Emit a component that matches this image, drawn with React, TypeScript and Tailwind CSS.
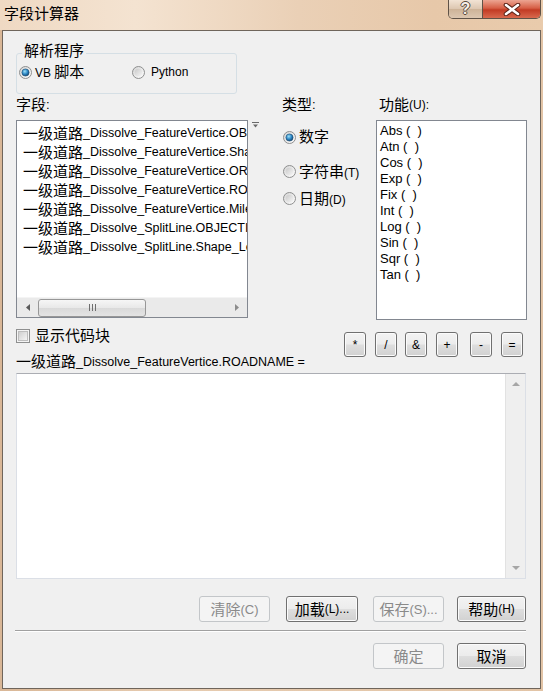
import React from 'react';

// CJK glyphs in this dialog are a bit larger than the latin ones
const C: React.FC<{ children: React.ReactNode }> = ({ children }) => (
  <span className="text-[15px]">{children}</span>
);

const Radio: React.FC<{ checked?: boolean }> = ({ checked }) => (
  <svg width="13" height="13" viewBox="0 0 13 13" className="shrink-0">
    <defs>
      <linearGradient id="radioBg" x1="0" y1="0" x2="1" y2="1">
        <stop offset="0" stopColor="#d4d4d4" />
        <stop offset="1" stopColor="#ffffff" />
      </linearGradient>
      <radialGradient id="radioDot" cx="0.4" cy="0.35" r="0.7">
        <stop offset="0" stopColor="#9be0f8" />
        <stop offset="0.55" stopColor="#2c86c4" />
        <stop offset="1" stopColor="#123f66" />
      </radialGradient>
      <linearGradient id="radioIn" x1="0" y1="0" x2="1" y2="1">
        <stop offset="0" stopColor="#c9c9c9" />
        <stop offset="1" stopColor="#f6f6f6" />
      </linearGradient>
    </defs>
    <circle cx="6.5" cy="6.5" r="6" fill="url(#radioBg)" stroke="#8e8f8f" />
    {checked ? (
      <circle cx="6.5" cy="6.5" r="3.6" fill="url(#radioDot)" stroke="#1b4d74" strokeWidth="0.6" />
    ) : (
      <circle cx="6.5" cy="6.5" r="3.8" fill="url(#radioIn)" />
    )}
  </svg>
);

const Checkbox: React.FC = () => (
  <svg width="14" height="14" viewBox="0 0 14 14" className="shrink-0">
    <defs>
      <linearGradient id="cbIn" x1="0" y1="0" x2="1" y2="1">
        <stop offset="0" stopColor="#cdcdcd" />
        <stop offset="1" stopColor="#f7f7f7" />
      </linearGradient>
    </defs>
    <rect x="0.5" y="0.5" width="13" height="13" fill="#f4f4f4" stroke="#8e8f8f" />
    <rect x="2.5" y="2.5" width="9" height="9" fill="url(#cbIn)" stroke="#bdbdbd" />
  </svg>
);

const Btn: React.FC<{ w: string; disabled?: boolean; children: React.ReactNode }> = ({ w, disabled, children }) => (
  <div
    className={`${w} h-[26px] shrink-0 rounded-[3px] flex items-center justify-center leading-none ${
      disabled
        ? 'border border-[#c3c6c9] bg-[#f4f4f4] text-[#8a8a8a]'
        : 'border border-[#707070] bg-[linear-gradient(#f3f3f3,#ececec_48%,#dedede_52%,#d1d1d1)] shadow-[inset_0_0_0_1px_#fbfbfb]'
    }`}
  >
    {children}
  </div>
);

const OpBtn: React.FC<{ label: string; ml: string }> = ({ label, ml }) => (
  <div className={`${ml} w-[22px] h-[25px] rounded-[3px] border border-[#707070] bg-[linear-gradient(#f3f3f3,#ececec_48%,#dedede_52%,#d1d1d1)] shadow-[inset_0_0_0_1px_#fbfbfb] flex items-center justify-center text-[12px]`}>
    {label}
  </div>
);

const fields = [
  'FeatureVertice.OBJECTID',
  'FeatureVertice.Shape',
  'FeatureVertice.ORIG_FID',
  'FeatureVertice.ROADNAME',
  'FeatureVertice.Mileage',
  'SplitLine.OBJECTID',
  'SplitLine.Shape_Length',
];

const funcs = ['Abs (  )', 'Atn (  )', 'Cos (  )', 'Exp (  )', 'Fix (  )', 'Int (  )', 'Log (  )', 'Sin (  )', 'Sqr (  )', 'Tan (  )'];

export default function App() {
  return (
    <div className="w-[543px] h-[691px] overflow-hidden bg-[linear-gradient(90deg,#d9b797,#e6cbb0_30%,#e2c4a6_100%)] font-['Liberation_Sans','Noto_Sans_CJK_SC',sans-serif] text-[13px] text-black">
      {/* title bar */}
      <div className="h-[30px] flex items-start bg-[linear-gradient(90deg,#efd9c3_0%,#f4e3d1_25%,#ead0b6_55%,#e7c8a9_80%,#e9cbac_100%)]">
        <div className="h-[28px] pl-[4px] flex items-center">
          <C>字段计算器</C>
        </div>
        <div className="ml-auto mr-[2px] flex h-[19px] border border-t-0 border-[#5f5247] rounded-b-[5px] overflow-hidden">
          <div className="w-[34px] flex items-center justify-center border-r border-[#5f5247] bg-[linear-gradient(#f2e3d4,#dcc6b0_50%,#cdb398_51%,#dcc6b0)]">
            <span className="text-[16px] font-bold leading-none text-[#f6efe8] [text-shadow:1px_0_#5a4a3c,-1px_0_#5a4a3c,0_1px_#5a4a3c,0_-1px_#5a4a3c]">?</span>
          </div>
          <div className="w-[57px] flex items-center justify-center bg-[linear-gradient(#eca592,#d65f46_45%,#c23b24_55%,#d8694e)]">
            <svg width="20" height="13" viewBox="0 0 20 13">
              <path d="M4 2 L16 11 M16 2 L4 11" stroke="#5a2318" strokeWidth="4.6" strokeLinecap="round" />
              <path d="M4 2 L16 11 M16 2 L4 11" stroke="#ffffff" strokeWidth="2.6" strokeLinecap="round" />
            </svg>
          </div>
        </div>
      </div>

      {/* dialog body */}
      <div className="ml-[2px] w-[539px] h-[659px] border border-[#6f655b] bg-[#f0f0f0] flex flex-col">
        {/* 解析程序 group */}
        <div className="relative ml-[13px] mt-[22px] w-[221px] h-[41px] rounded-[3px] border border-[#d5dfe5]">
          <span className="absolute left-[5px] -top-[13px] px-[2px] bg-[#f0f0f0] leading-[20px]">
            <C>解析程序</C>
          </span>
          <div className="mt-[11px] pl-[2px] h-[14px] flex items-center">
            <div className="w-[113px] flex items-center gap-[3px]">
              <Radio checked />
              <span className="text-[12px] leading-[14px]">
                VB <C>脚本</C>
              </span>
            </div>
            <div className="flex items-center gap-[6px]">
              <Radio />
              <span className="text-[12px] leading-[14px]">Python</span>
            </div>
          </div>
        </div>

        {/* fields / type / functions */}
        <div className="flex">
          <div className="ml-[13px] w-[265px]">
            <div className="h-[22px] flex items-center">
              <C>字段</C>:
            </div>
            <div className="mt-[4px] flex items-start">
              <div className="w-[232px] h-[198px] border border-[#828790] bg-white flex flex-col overflow-hidden">
                <div className="flex-1 pt-[3px] overflow-hidden">
                  {fields.map((f) => (
                    <div key={f} className="h-[19px] pl-[6px] flex items-center whitespace-nowrap leading-none">
                      <C>一级道路</C>
                      <span className="text-[12.5px]">_Dissolve_{f}</span>
                    </div>
                  ))}
                </div>
                <div className="h-[20px] bg-[#eaeaea] border-t border-[#f4f4f4] flex items-center">
                  <div className="w-[21px] h-full flex items-center justify-center">
                    <svg width="4" height="7" viewBox="0 0 4 7">
                      <polygon points="4,0 4,7 0,3.5" fill="#5a5a5a" />
                    </svg>
                  </div>
                  <div className="w-[108px] h-[18px] rounded-[3px] border border-[#979797] bg-[linear-gradient(#f6f6f6,#e8e8e8_50%,#d9d9d9_51%,#e4e4e4)] flex items-center justify-center">
                    <svg width="9" height="7" viewBox="0 0 9 7">
                      <path d="M1.5 0 V7 M4.5 0 V7 M7.5 0 V7" stroke="#6e6e6e" strokeWidth="1" />
                    </svg>
                  </div>
                  <div className="flex-1" />
                  <div className="w-[21px] h-full flex items-center justify-center">
                    <svg width="4" height="7" viewBox="0 0 4 7">
                      <polygon points="0,0 0,7 4,3.5" fill="#8c8c8c" />
                    </svg>
                  </div>
                </div>
              </div>
              <svg width="7" height="6" viewBox="0 0 7 6" className="ml-[4px] mt-[2px]">
                <rect x="0" y="0" width="7" height="1" fill="#6a6a6a" />
                <polygon points="1,2.5 6,2.5 3.5,5.5" fill="#6a6a6a" />
              </svg>
            </div>
          </div>

          <div className="w-[95px]">
            <div className="h-[22px] pl-[1px] flex items-center">
              <C>类型</C>:
            </div>
            <div className="mt-[11px] h-[20px] pl-[2px] flex items-center gap-[3px]">
              <Radio checked />
              <C>数字</C>
            </div>
            <div className="mt-[14px] h-[20px] pl-[2px] flex items-center gap-[3px]">
              <Radio />
              <span className="leading-none">
                <C>字符串</C>
                <span className="text-[12px]">(T)</span>
              </span>
            </div>
            <div className="mt-[7px] h-[20px] pl-[2px] flex items-center gap-[3px]">
              <Radio />
              <span className="leading-none">
                <C>日期</C>
                <span className="text-[12px]">(D)</span>
              </span>
            </div>
          </div>

          <div className="w-[151px]">
            <div className="h-[22px] pl-[3px] flex items-center">
              <C>功能</C>
              <span className="text-[12px]">(U):</span>
            </div>
            <div className="mt-[4px] w-[151px] h-[200px] border border-[#828790] bg-white pt-[2px] pl-[3px]">
              {funcs.map((f) => (
                <div key={f} className="h-[16px] leading-[16px] whitespace-pre">
                  {f}
                </div>
              ))}
            </div>
          </div>
        </div>

        {/* code block toggle + operators */}
        <div className="ml-[13px] w-[509px] flex">
          <div className="flex-1">
            <div className="mt-[7px] h-[18px] flex items-center gap-[5px]">
              <Checkbox />
              <C>显示代码块</C>
            </div>
            <div className="mt-[8px] h-[18px] flex items-center whitespace-nowrap">
              <C>一级道路</C>
              <span className="text-[12.5px]">_Dissolve_FeatureVertice.ROADNAME =</span>
            </div>
          </div>
          <div className="mt-[12px] mr-[2px] flex items-start">
            <OpBtn label="*" ml="ml-0" />
            <OpBtn label="/" ml="ml-[9px]" />
            <OpBtn label="&" ml="ml-[8px]" />
            <OpBtn label="+" ml="ml-[9px]" />
            <OpBtn label="-" ml="ml-[12px]" />
            <OpBtn label="=" ml="ml-[9px]" />
          </div>
        </div>

        {/* expression box */}
        <div className="mt-[2px] ml-[13px] w-[510px] h-[206px] border border-[#dbdfe6] border-t-[#abadb3] bg-white flex">
          <div className="flex-1" />
          <div className="w-[20px] bg-[#efefef] border-l border-[#e2e2e2] flex flex-col justify-between">
            <div className="h-[20px] flex items-center justify-center">
              <svg width="8" height="4" viewBox="0 0 8 4">
                <polygon points="0,4 8,4 4,0" fill="#a6a6a6" />
              </svg>
            </div>
            <div className="h-[20px] flex items-center justify-center">
              <svg width="8" height="4" viewBox="0 0 8 4">
                <polygon points="0,0 8,0 4,4" fill="#a6a6a6" />
              </svg>
            </div>
          </div>
        </div>

        {/* action buttons */}
        <div className="mt-[17px] pr-[14px] flex justify-end">
          <Btn w="w-[71px]" disabled>
            <C>清除</C>
            <span className="text-[13px]">(C)</span>
          </Btn>
          <div className="w-[16px]" />
          <Btn w="w-[72px]">
            <C>加载</C>
            <span className="text-[12px]">(L)...</span>
          </Btn>
          <div className="w-[15px]" />
          <Btn w="w-[71px]" disabled>
            <C>保存</C>
            <span className="text-[13px]">(S)...</span>
          </Btn>
          <div className="w-[13px]" />
          <Btn w="w-[69px]">
            <C>帮助</C>
            <span className="text-[12px]">(H)</span>
          </Btn>
        </div>

        <div className="mt-[8px] ml-[12px] w-[511px] border-t border-b border-t-[#a0a0a0] border-b-white" />

        <div className="mt-[11px] pr-[14px] flex justify-end">
          <Btn w="w-[71px]" disabled>
            <C>确定</C>
          </Btn>
          <div className="w-[13px]" />
          <Btn w="w-[69px]">
            <C>取消</C>
          </Btn>
        </div>
      </div>
    </div>
  );
}
